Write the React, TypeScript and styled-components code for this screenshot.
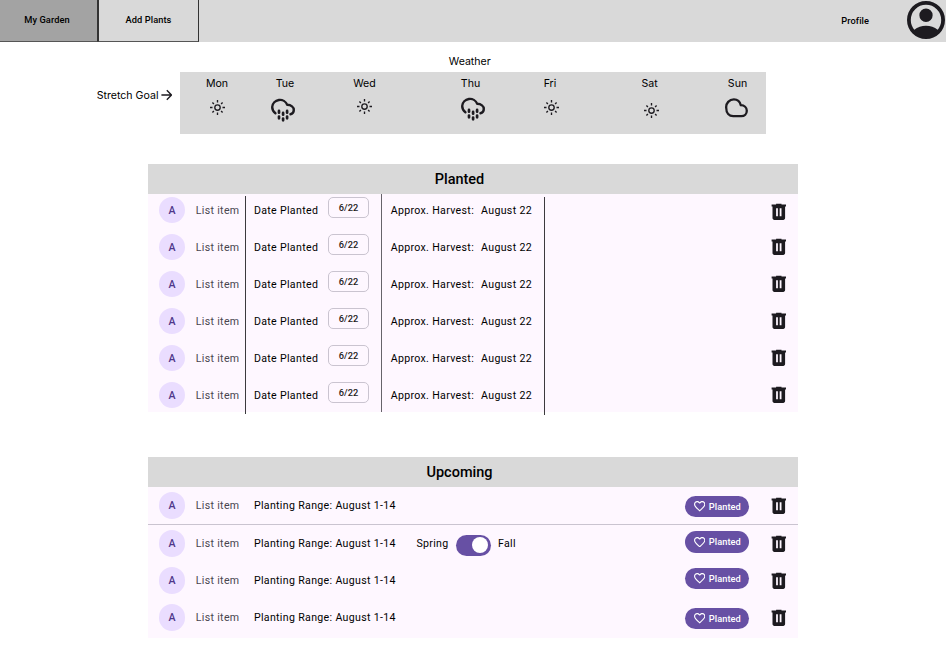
import React from 'react';
import styled, { createGlobalStyle } from 'styled-components';

const GlobalStyle = createGlobalStyle`
  *, *::before, *::after { box-sizing: border-box; }
  body {
    margin: 0;
    background: #fff;
    color: #000;
    font-family: Roboto, sans-serif;
    overflow: hidden;
  }
  svg { display: block; flex: none; }
`;

const Page = styled.div`
  width: 946px;
  height: 672px;
  display: flex;
  flex-direction: column;
`;

const NavBar = styled.nav`
  display: flex;
  align-items: center;
  height: 42px;
  flex: none;
  background: #d9d9d9;
`;

const NavTab = styled.button<{ $active?: boolean }>`
  width: ${(p) => (p.$active ? 98 : 101)}px;
  height: 42px;
  padding: 0 ${(p) => (p.$active ? 3 : 0)}px 2px 0;
  border: 0 solid #333;
  border-right-width: 1px;
  border-bottom: 1px solid #555;
  border-left-width: ${(p) => (p.$active ? 0 : 1)}px;
  background: ${(p) => (p.$active ? '#a3a3a3' : '#d9d9d9')};
  color: #000;
  font: 500 9.25px Roboto, sans-serif;
  letter-spacing: 0.07px;
`;

const Profile = styled.div`
  display: flex;
  align-items: center;
  gap: 38.2px;
  margin-left: auto;
  margin-right: 0.8px;
  padding-bottom: 2px;
  font-weight: 500;
  font-size: 9.25px;
  letter-spacing: 0.07px;
`;

const WeatherArea = styled.section`
  display: grid;
  grid-template-columns: 180px 585.5px;
  grid-template-rows: 30px 62px;
  font-family: Inter, sans-serif;
  font-size: 10.6px;
`;

const WeatherTitle = styled.h2`
  grid-column: 2;
  margin: 0;
  padding: 12px 6px 0 0;
  text-align: center;
  font-size: 10.6px;
  line-height: 15px;
  font-weight: 400;
`;

const Goal = styled.div`
  display: flex;
  justify-content: flex-end;
  align-items: center;
  gap: 2px;
  height: 46px;
  padding-right: 8px;
`;

const Forecast = styled.div`
  display: grid;
  grid-template-columns: 74px 62px 97px 115px 44px 155px 21px;
  background: #d9d9d9;
`;

const Day = styled.div`
  display: flex;
  flex-direction: column;
  align-items: center;
  padding-top: 5px;
  line-height: 14px;
`;

const WeatherIcon = styled.span<{ $top: number; $shift: number }>`
  display: flex;
  margin-top: ${(p) => p.$top}px;
  margin-left: ${(p) => p.$shift}px;
`;

const Panel = styled.section<{ $gap: number }>`
  position: relative;
  width: 650px;
  margin: ${(p) => p.$gap}px 0 0 148px;
`;

const PanelTitle = styled.h2`
  margin: 0;
  height: 30px;
  padding-right: 27px;
  background: #d9d9d9;
  text-align: center;
  font-weight: 500;
  font-size: 14.5px;
  line-height: 31px;
`;

const PanelBody = styled.div<{ $height: number }>`
  display: flex;
  flex-direction: column;
  height: ${(p) => p.$height}px;
  background: #fef7ff;
`;

const RowList = styled.div<{ $offset?: number }>`
  margin-top: ${(p) => p.$offset ?? 0}px;
`;

const Row = styled.div<{ $columns: string; $divided?: boolean }>`
  display: grid;
  grid-template-columns: ${(p) => p.$columns};
  align-items: center;
  height: ${(p) => (p.$divided ? 38 : 37)}px;
  padding-left: 10.8px;
  border-bottom: ${(p) => (p.$divided ? '1px solid #cac4d0' : '0')};
  font-size: 10.6px;
  letter-spacing: 0.33px;
  white-space: nowrap;
`;

const plantedColumns = '36.9px 58.2px 74.2px 62.6px 90.4px 286.8px 1fr';
const upcomingColumns = '36.9px 58.2px 162.5px 40px 41.5px 187px 83px 1fr';

const Avatar = styled.span`
  display: grid;
  place-items: center;
  width: 26.4px;
  height: 26.4px;
  padding-top: 1px;
  border-radius: 50%;
  background: #eaddff;
  color: #4f378a;
  font-weight: 500;
  letter-spacing: 0.07px;
`;

const ItemName = styled.span`
  color: #49454f;
`;

const DateChip = styled.span`
  display: grid;
  place-items: center;
  width: 41px;
  height: 21px;
  margin-bottom: 5px;
  border: 1px solid #cac4d0;
  border-radius: 5px;
  color: #1d1b20;
  font-weight: 500;
  font-size: 9.25px;
  letter-spacing: 0.07px;
`;

const TrashSlot = styled.span<{ $drop?: number }>`
  margin-top: ${(p) => p.$drop ?? 0}px;
`;

const ColumnRule = styled.span<{ $x: number; $y: number; $soft?: boolean }>`
  position: absolute;
  left: ${(p) => p.$x}px;
  top: ${(p) => p.$y}px;
  width: ${(p) => (p.$soft ? 1.5 : 1)}px;
  height: 218px;
  background: ${(p) => (p.$soft ? '#66636a' : '#3c3a3e')};
`;

const PlantedButton = styled.button<{ $lift: number }>`
  display: flex;
  align-items: center;
  justify-content: center;
  gap: 3.5px;
  width: 64px;
  height: 21.2px;
  margin: ${(p) => p.$lift}px 0 0;
  padding: 0 0 0 1px;
  border: 0;
  border-radius: 11px;
  background: #6750a4;
  color: #fff;
  font: 500 9.25px Roboto, sans-serif;
  letter-spacing: 0.07px;
`;

const Toggle = styled.span`
  display: flex;
  align-items: center;
  justify-content: flex-end;
  width: 34.5px;
  height: 21.3px;
  margin-top: 4px;
  padding-right: 2.7px;
  border-radius: 11px;
  background: #6750a4;
`;

const ToggleKnob = styled.span`
  width: 16px;
  height: 16px;
  border-radius: 50%;
  background: #fff;
`;

const AccountIcon = () => (
  <svg width="38" height="38" viewBox="80 -880 800 800" fill="#1d1b20">
    <path d="M234-276q51-39 114-61.5T480-360q69 0 132 22.5T726-276q35-41 54.5-93T800-480q0-133-93.5-226.5T480-800q-133 0-226.5 93.5T160-480q0 59 19.5 111t54.5 93Zm246-164q-59 0-99.5-40.5T340-580q0-59 40.5-99.5T480-720q59 0 99.5 40.5T620-580q0 59-40.5 99.5T480-440Zm0 360q-83 0-156-31.5T197-197q-54-54-85.5-127T80-480q0-83 31.5-156T197-763q54-54 127-85.5T480-880q83 0 156 31.5T763-763q54 54 85.5 127T880-480q0 83-31.5 156T763-197q-54 54-127 85.5T480-80Z" />
  </svg>
);

const TrashIcon = () => (
  <svg width="21.6" height="21.6" viewBox="0 -960 960 960" fill="#1d1b20">
    <path d="M280-120q-33 0-56.5-23.5T200-200v-520h-40v-80h200v-40h240v40h200v80h-40v520q0 33-23.5 56.5T680-120H280Zm80-160h80v-360h-80v360Zm160 0h80v-360h-80v360Z" />
  </svg>
);

const HeartIcon = () => (
  <svg width="11.4" height="10.6" viewBox="2 3 20 18.35" fill="#fff">
    <path d="M16.5 3c-1.74 0-3.41.81-4.5 2.09C10.91 3.81 9.24 3 7.5 3 4.42 3 2 5.42 2 8.5c0 3.78 3.4 6.86 8.55 11.54L12 21.35l1.45-1.32C18.6 15.36 22 12.28 22 8.5 22 5.42 19.58 3 16.5 3zm-4.4 15.55-.1.1-.1-.1C7.14 14.24 4 11.39 4 8.5 4 6.5 5.5 5 7.5 5c1.54 0 3.04.99 3.57 2.36h1.87C13.46 5.99 14.96 5 16.5 5c2 0 3.5 1.5 3.5 3.5 0 2.89-3.14 5.74-7.9 10.05z" />
  </svg>
);

const ArrowIcon = () => (
  <svg width="11.5" height="12" viewBox="0 0 11.5 12" fill="none" stroke="#1d1b20" strokeWidth="1.35">
    <path d="M.4 6h10M5.8 1.3 10.5 6l-4.7 4.7" />
  </svg>
);

const SunIcon = () => (
  <svg width="15" height="15" viewBox="0 0 15 15" fill="none" stroke="#1d1b20" strokeWidth="1.35">
    <circle cx="7.5" cy="7.5" r="2.7" />
    <path d="M7.5 0v2.5M7.5 12.5V15M0 7.5h2.5M12.5 7.5H15M2.4 2.4l1.5 1.5M11.1 11.1l1.5 1.5M2.4 12.6l1.5-1.5M11.1 3.9l1.5-1.5" />
  </svg>
);

const RainIcon = () => (
  <svg width="24" height="24" viewBox="0 0 24 24" fill="none" stroke="#1d1b20" strokeWidth="2.4" strokeLinecap="round">
    <path d="M4.4 15.2A7.6 7.6 0 0 1 1.2 9a7.8 7.8 0 0 1 15-2.2c3.9.2 6.6 2.3 6.6 5.2 0 2.2-1.3 3.8-3.3 4.2" strokeLinejoin="round" />
    <path d="M8 12.9v1.8M12.1 14.9v1.8M16.1 12.9v1.8M8 18.5v1.8M12.1 20.5v1.8M16.1 18.5v1.8" strokeWidth="2.7" />
  </svg>
);

const CloudIcon = () => (
  <svg width="23" height="20" viewBox="0 0 23 20" fill="none" stroke="#1d1b20" strokeWidth="2.3" strokeLinejoin="round">
    <path d="M8.2 18.2C4.2 18.2 1.2 15 1.2 9.8A7.8 7.8 0 0 1 8.9 1.3c3.5 0 6 2.1 6.9 5.9 3.5.1 6 2.2 6 5.5 0 3.3-2.3 5.5-5.5 5.5Z" />
  </svg>
);

const icons = { sun: SunIcon, rain: RainIcon, cloud: CloudIcon };

type DayForecast = { name: string; icon: keyof typeof icons; top: number; shift: number };

const forecast: DayForecast[] = [
  { name: 'Mon', icon: 'sun', top: 8.5, shift: 0.5 },
  { name: 'Tue', icon: 'rain', top: 7, shift: -4 },
  { name: 'Wed', icon: 'sun', top: 8, shift: -1 },
  { name: 'Thu', icon: 'rain', top: 6.3, shift: 5 },
  { name: 'Fri', icon: 'sun', top: 8.5, shift: 2 },
  { name: 'Sat', icon: 'sun', top: 12, shift: 3 },
  { name: 'Sun', icon: 'cloud', top: 7, shift: -2 },
];

const plantedTrash = [4.5, 0, 0, 0, 0, 0];

const upcoming = [
  { lift: 2, season: false },
  { lift: -3, season: true },
  { lift: -4, season: false },
  { lift: 1.5, season: false },
];

export default function App() {
  return (
    <Page>
      <GlobalStyle />
      <NavBar>
        <NavTab $active>My Garden</NavTab>
        <NavTab>Add Plants</NavTab>
        <Profile>
          Profile
          <AccountIcon />
        </Profile>
      </NavBar>

      <WeatherArea>
        <WeatherTitle>Weather</WeatherTitle>
        <Goal>
          Stretch Goal
          <ArrowIcon />
        </Goal>
        <Forecast>
          {forecast.map((day) => {
            const Icon = icons[day.icon];
            return (
              <Day key={day.name}>
                {day.name}
                <WeatherIcon $top={day.top} $shift={day.shift}>
                  <Icon />
                </WeatherIcon>
              </Day>
            );
          })}
        </Forecast>
      </WeatherArea>

      <Panel $gap={30}>
        <PanelTitle>Planted</PanelTitle>
        <PanelBody $height={217.7}>
          <RowList $offset={-2.5}>
            {plantedTrash.map((drop, i) => (
              <Row key={i} $columns={plantedColumns}>
                <Avatar>A</Avatar>
                <ItemName>List item</ItemName>
                <span>Date Planted</span>
                <DateChip>6/22</DateChip>
                <span>Approx. Harvest:</span>
                <span>August 22</span>
                <TrashSlot $drop={drop}>
                  <TrashIcon />
                </TrashSlot>
              </Row>
            ))}
          </RowList>
        </PanelBody>
        <ColumnRule $x={97} $y={32} />
        <ColumnRule $x={232.5} $y={30} $soft />
        <ColumnRule $x={396} $y={33} />
      </Panel>

      <Panel $gap={45.3}>
        <PanelTitle>Upcoming</PanelTitle>
        <PanelBody $height={151}>
          <RowList>
            {upcoming.map((item, i) => (
              <Row key={i} $columns={upcomingColumns} $divided={i === 0}>
                <Avatar>A</Avatar>
                <ItemName>List item</ItemName>
                <span>Planting Range: August 1-14</span>
                <span>{item.season && 'Spring'}</span>
                <span>{item.season && <Toggle><ToggleKnob /></Toggle>}</span>
                <span>{item.season && 'Fall'}</span>
                <PlantedButton $lift={item.lift}>
                  <HeartIcon />
                  Planted
                </PlantedButton>
                <TrashSlot>
                  <TrashIcon />
                </TrashSlot>
              </Row>
            ))}
          </RowList>
        </PanelBody>
      </Panel>
    </Page>
  );
}
